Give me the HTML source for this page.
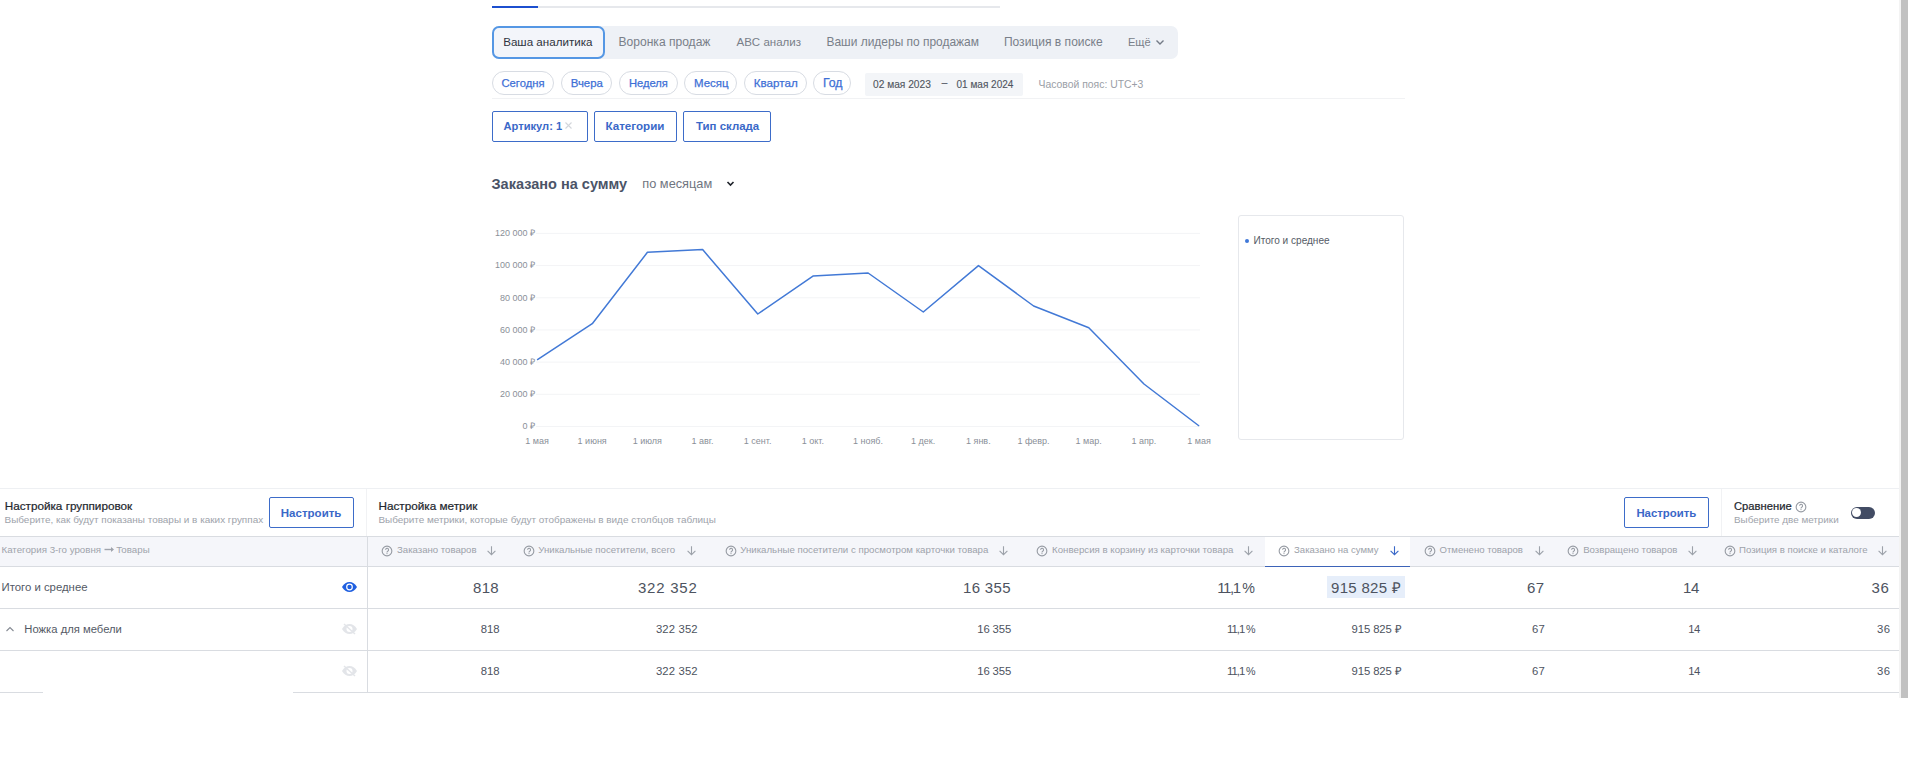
<!DOCTYPE html><html><head><meta charset='utf-8'><style>
html,body{margin:0;padding:0;background:#fff;width:1908px;height:773px;overflow:hidden;position:relative;font-family:"Liberation Sans", sans-serif}
.t{position:absolute;white-space:nowrap;line-height:1}
.b{position:absolute;box-sizing:border-box}
.ic{position:absolute}
</style></head><body>
<!-- progress line -->
<div class='b' style='left:492px;top:6px;width:508px;height:2px;background:#e6e8ec'></div>
<div class='b' style='left:492px;top:6px;width:46px;height:2px;background:#1c4fcf'></div>
<!-- tab bar -->
<div class='b' style='left:492px;top:26px;width:686px;height:32.5px;background:#eef1f6;border-radius:7px'></div>
<div class='b' style='left:492px;top:26px;width:113px;height:32.5px;background:#f3f5fa;border:2px solid #5597e4;border-radius:7px'></div>
<svg class='ic' style='left:1155px;top:38px' width='10' height='8' viewBox='0 0 10 8'><path d='M1.5 2.5L5 6l3.5-3.5' fill='none' stroke='#737a86' stroke-width='1.4'/></svg>
<!-- chips -->
<div class='b' style='left:492px;top:71px;width:62.39999999999998px;height:24px;border:1px solid #d8dce3;border-radius:12px'></div><div class='b' style='left:561px;top:71px;width:51.39999999999998px;height:24px;border:1px solid #d8dce3;border-radius:12px'></div><div class='b' style='left:619.4px;top:71px;width:58.30000000000007px;height:24px;border:1px solid #d8dce3;border-radius:12px'></div><div class='b' style='left:684.4px;top:71px;width:53.0px;height:24px;border:1px solid #d8dce3;border-radius:12px'></div><div class='b' style='left:744.2px;top:71px;width:62.59999999999991px;height:24px;border:1px solid #d8dce3;border-radius:12px'></div><div class='b' style='left:813.3px;top:71px;width:38.10000000000002px;height:24px;border:1px solid #d8dce3;border-radius:12px'></div>
<div class='b' style='left:865px;top:73px;width:158px;height:23px;background:#f3f5f8;border-radius:2px'></div>
<div class='b' style='left:492px;top:98px;width:913px;height:1px;background:#f1f2f4'></div>
<!-- filter buttons -->
<div class='b' style='left:492px;top:111px;width:96px;height:31px;border:1.5px solid #3d6cc9;border-radius:2px'></div><div class='b' style='left:594px;top:111px;width:83px;height:31px;border:1.5px solid #3d6cc9;border-radius:2px'></div><div class='b' style='left:683px;top:111px;width:88px;height:31px;border:1.5px solid #3d6cc9;border-radius:2px'></div>
<svg class='ic' style='left:564px;top:121px' width='9' height='9' viewBox='0 0 9 9'><path d='M1.5 1.5l6 6M7.5 1.5l-6 6' stroke='#d3d6db' stroke-width='1.1'/></svg>
<!-- chart chevron -->
<svg class='ic' style='left:726px;top:179px' width='9' height='9' viewBox='0 0 9 9'><path d='M1.5 3L4.5 6l3-3' fill='none' stroke='#1f232b' stroke-width='1.6'/></svg>
<svg style='position:absolute;left:0;top:0' width='1908' height='773' viewBox='0 0 1908 773'><line x1='536' x2='1200' y1='233.40' y2='233.40' stroke='#f3f4f6' stroke-width='1'/><line x1='536' x2='1200' y1='265.58' y2='265.58' stroke='#f3f4f6' stroke-width='1'/><line x1='536' x2='1200' y1='297.76' y2='297.76' stroke='#f3f4f6' stroke-width='1'/><line x1='536' x2='1200' y1='329.94' y2='329.94' stroke='#f3f4f6' stroke-width='1'/><line x1='536' x2='1200' y1='362.12' y2='362.12' stroke='#f3f4f6' stroke-width='1'/><line x1='536' x2='1200' y1='394.30' y2='394.30' stroke='#f3f4f6' stroke-width='1'/><line x1='536' x2='1200' y1='426.48' y2='426.48' stroke='#f3f4f6' stroke-width='1'/><polyline points='537.1,359.8 592.27,323.7 647.44,252.3 702.61,249.6 757.78,314 812.95,276.1 868.12,273 923.29,312 978.46,265.6 1033.63,306 1088.8000000000002,327.8 1143.97,384 1199.1399999999999,426' fill='none' stroke='#4279d6' stroke-width='1.5' stroke-linejoin='round'/></svg>
<!-- legend -->
<div class='b' style='left:1238px;top:215px;width:166px;height:225px;border:1px solid #e6e8ec;border-radius:3px'></div>
<div class='b' style='left:1245px;top:239px;width:4px;height:4px;border-radius:50%;background:#3f78d8'></div>
<!-- bottom section -->
<div class='b' style='left:0;top:488px;width:1900px;height:1px;background:#eef0f3'></div>
<div class='b' style='left:366px;top:489px;width:1px;height:47px;background:#f1f2f4'></div>
<div class='b' style='left:1721px;top:489px;width:1px;height:47px;background:#f1f2f4'></div>
<div class='b' style='left:269px;top:497px;width:85px;height:31px;border:1.5px solid #3d6cc9;border-radius:2px'></div>
<div class='b' style='left:1624px;top:497px;width:85px;height:31px;border:1.5px solid #3d6cc9;border-radius:2px'></div>
<svg class='ic' style='left:1794.75px;top:500.5px' width='12' height='12' viewBox='0 0 12 12'><circle cx='6' cy='6' r='4.85' fill='none' stroke='#969ba3' stroke-width='1.1'/><path d='M4.55 4.85a1.5 1.5 0 1 1 2.15 1.35c-.45.25-.7.55-.7 1v.3' fill='none' stroke='#969ba3' stroke-width='1.05'/><circle cx='6' cy='8.55' r='.6' fill='#969ba3'/></svg>
<div class='b' style='left:1851px;top:507px;width:24px;height:12px;border-radius:6px;background:#424c64'></div>
<div class='b' style='left:1851.8px;top:507.9px;width:9.4px;height:9.4px;border-radius:50%;background:#fff'></div>
<!-- table -->
<div class='b' style='left:0;top:536px;width:1899px;height:31px;background:#f5f6fa;border-top:1px solid #d9dce1;border-bottom:1px solid #d9dce1'></div>
<div class='b' style='left:1265px;top:537px;width:145px;height:29px;background:#fff'></div><div class='b' style='left:1265px;top:566px;width:145px;height:1px;background:#3d63b8'></div>
<div class='b' style='left:0;top:608px;width:1899px;height:1px;background:#d9dce1'></div>
<div class='b' style='left:0;top:650px;width:1899px;height:1px;background:#d9dce1'></div>
<div class='b' style='left:0;top:692px;width:43px;height:1px;background:#d9dce1'></div>
<div class='b' style='left:293px;top:692px;width:1606px;height:1px;background:#d9dce1'></div>
<div class='b' style='left:367px;top:536px;width:1px;height:157px;background:#d9dce1'></div>
<div class='b' style='left:1327px;top:576px;width:78px;height:22px;background:#e6eefa'></div>
<!-- eyes -->
<svg class='ic' style='left:341px;top:581px' width='17' height='12' viewBox='0 0 17 12'><path d='M1 6C3 2.6 5.6 1 8.5 1S14 2.6 16 6c-2 3.4-4.6 5-7.5 5S3 9.4 1 6z' fill='#1f5fe0'/><circle cx='8.5' cy='6' r='3.4' fill='#fff'/><circle cx='8.5' cy='6' r='2.2' fill='#1f5fe0'/></svg>
<svg class='ic' style='left:341px;top:623px' width='17' height='12' viewBox='0 0 17 12'><path d='M1 6C3 2.6 5.6 1 8.5 1S14 2.6 16 6c-2 3.4-4.6 5-7.5 5S3 9.4 1 6z' fill='#e3e5e9'/><circle cx='8.5' cy='6' r='3' fill='#fff'/><path d='M3 1l11 10' stroke='#e3e5e9' stroke-width='1.5'/></svg>
<svg class='ic' style='left:341px;top:665px' width='17' height='12' viewBox='0 0 17 12'><path d='M1 6C3 2.6 5.6 1 8.5 1S14 2.6 16 6c-2 3.4-4.6 5-7.5 5S3 9.4 1 6z' fill='#e3e5e9'/><circle cx='8.5' cy='6' r='3' fill='#fff'/><path d='M3 1l11 10' stroke='#e3e5e9' stroke-width='1.5'/></svg>
<svg class='ic' style='left:5px;top:625px' width='10' height='8' viewBox='0 0 10 8'><path d='M1.5 6L5 2.5 8.5 6' fill='none' stroke='#858a93' stroke-width='1.1'/></svg>
<svg class='ic' style='left:380.5px;top:544.5px' width='12' height='12' viewBox='0 0 12 12'><circle cx='6' cy='6' r='4.85' fill='none' stroke='#969ba3' stroke-width='1.1'/><path d='M4.55 4.85a1.5 1.5 0 1 1 2.15 1.35c-.45.25-.7.55-.7 1v.3' fill='none' stroke='#969ba3' stroke-width='1.05'/><circle cx='6' cy='8.55' r='.6' fill='#969ba3'/></svg><svg class='ic' style='left:487.4px;top:546px' width='10' height='10' viewBox='0 0 10 10'><path d='M4.5 0.3v8.4M0.6 4.9l3.9 3.85 3.9-3.85' fill='none' stroke='#9da2aa' stroke-width='1.1'/></svg><svg class='ic' style='left:522.7px;top:544.5px' width='12' height='12' viewBox='0 0 12 12'><circle cx='6' cy='6' r='4.85' fill='none' stroke='#969ba3' stroke-width='1.1'/><path d='M4.55 4.85a1.5 1.5 0 1 1 2.15 1.35c-.45.25-.7.55-.7 1v.3' fill='none' stroke='#969ba3' stroke-width='1.05'/><circle cx='6' cy='8.55' r='.6' fill='#969ba3'/></svg><svg class='ic' style='left:686.5px;top:546px' width='10' height='10' viewBox='0 0 10 10'><path d='M4.5 0.3v8.4M0.6 4.9l3.9 3.85 3.9-3.85' fill='none' stroke='#9da2aa' stroke-width='1.1'/></svg><svg class='ic' style='left:724.6px;top:544.5px' width='12' height='12' viewBox='0 0 12 12'><circle cx='6' cy='6' r='4.85' fill='none' stroke='#969ba3' stroke-width='1.1'/><path d='M4.55 4.85a1.5 1.5 0 1 1 2.15 1.35c-.45.25-.7.55-.7 1v.3' fill='none' stroke='#969ba3' stroke-width='1.05'/><circle cx='6' cy='8.55' r='.6' fill='#969ba3'/></svg><svg class='ic' style='left:999.4px;top:546px' width='10' height='10' viewBox='0 0 10 10'><path d='M4.5 0.3v8.4M0.6 4.9l3.9 3.85 3.9-3.85' fill='none' stroke='#9da2aa' stroke-width='1.1'/></svg><svg class='ic' style='left:1035.8px;top:544.5px' width='12' height='12' viewBox='0 0 12 12'><circle cx='6' cy='6' r='4.85' fill='none' stroke='#969ba3' stroke-width='1.1'/><path d='M4.55 4.85a1.5 1.5 0 1 1 2.15 1.35c-.45.25-.7.55-.7 1v.3' fill='none' stroke='#969ba3' stroke-width='1.05'/><circle cx='6' cy='8.55' r='.6' fill='#969ba3'/></svg><svg class='ic' style='left:1243.8px;top:546px' width='10' height='10' viewBox='0 0 10 10'><path d='M4.5 0.3v8.4M0.6 4.9l3.9 3.85 3.9-3.85' fill='none' stroke='#9da2aa' stroke-width='1.1'/></svg><svg class='ic' style='left:1277.5px;top:544.5px' width='12' height='12' viewBox='0 0 12 12'><circle cx='6' cy='6' r='4.85' fill='none' stroke='#969ba3' stroke-width='1.1'/><path d='M4.55 4.85a1.5 1.5 0 1 1 2.15 1.35c-.45.25-.7.55-.7 1v.3' fill='none' stroke='#969ba3' stroke-width='1.05'/><circle cx='6' cy='8.55' r='.6' fill='#969ba3'/></svg><svg class='ic' style='left:1389.5px;top:546px' width='10' height='10' viewBox='0 0 10 10'><path d='M4.5 0.3v8.4M0.6 4.9l3.9 3.85 3.9-3.85' fill='none' stroke='#3a68c8' stroke-width='1.1'/></svg><svg class='ic' style='left:1423.5px;top:544.5px' width='12' height='12' viewBox='0 0 12 12'><circle cx='6' cy='6' r='4.85' fill='none' stroke='#969ba3' stroke-width='1.1'/><path d='M4.55 4.85a1.5 1.5 0 1 1 2.15 1.35c-.45.25-.7.55-.7 1v.3' fill='none' stroke='#969ba3' stroke-width='1.05'/><circle cx='6' cy='8.55' r='.6' fill='#969ba3'/></svg><svg class='ic' style='left:1534.5px;top:546px' width='10' height='10' viewBox='0 0 10 10'><path d='M4.5 0.3v8.4M0.6 4.9l3.9 3.85 3.9-3.85' fill='none' stroke='#9da2aa' stroke-width='1.1'/></svg><svg class='ic' style='left:1567.2px;top:544.5px' width='12' height='12' viewBox='0 0 12 12'><circle cx='6' cy='6' r='4.85' fill='none' stroke='#969ba3' stroke-width='1.1'/><path d='M4.55 4.85a1.5 1.5 0 1 1 2.15 1.35c-.45.25-.7.55-.7 1v.3' fill='none' stroke='#969ba3' stroke-width='1.05'/><circle cx='6' cy='8.55' r='.6' fill='#969ba3'/></svg><svg class='ic' style='left:1688px;top:546px' width='10' height='10' viewBox='0 0 10 10'><path d='M4.5 0.3v8.4M0.6 4.9l3.9 3.85 3.9-3.85' fill='none' stroke='#9da2aa' stroke-width='1.1'/></svg><svg class='ic' style='left:1723.8px;top:544.5px' width='12' height='12' viewBox='0 0 12 12'><circle cx='6' cy='6' r='4.85' fill='none' stroke='#969ba3' stroke-width='1.1'/><path d='M4.55 4.85a1.5 1.5 0 1 1 2.15 1.35c-.45.25-.7.55-.7 1v.3' fill='none' stroke='#969ba3' stroke-width='1.05'/><circle cx='6' cy='8.55' r='.6' fill='#969ba3'/></svg><svg class='ic' style='left:1877.9px;top:546px' width='10' height='10' viewBox='0 0 10 10'><path d='M4.5 0.3v8.4M0.6 4.9l3.9 3.85 3.9-3.85' fill='none' stroke='#9da2aa' stroke-width='1.1'/></svg>
<svg class='ic' style='left:104px;top:546px' width='11' height='7' viewBox='0 0 11 7'><path d='M0.5 3.5h8.5' stroke='#a0a4ac' stroke-width='1.4'/><path d='M7 1l3 2.5-3 2.5z' fill='#a0a4ac'/></svg>
<!-- scrollbar -->
<div class='b' style='left:1899px;top:0;width:2px;height:698px;background:#f3f3f3'></div>
<div class='b' style='left:1901px;top:0;width:7px;height:698px;background:#c1c1c1'></div>
<span class='t' style='left:503.20px;top:36.18px;font-size:11.608px;font-weight:400;color:#2f3440;'>Ваша аналитика</span><span class='t' style='left:618.50px;top:35.78px;font-size:12.079px;font-weight:400;color:#797f89;'>Воронка продаж</span><span class='t' style='left:736.50px;top:37.24px;font-size:11.528px;font-weight:400;color:#797f89;'>ABC анализ</span><span class='t' style='left:826.50px;top:36.87px;font-size:11.964px;font-weight:400;color:#797f89;'>Ваши лидеры по продажам</span><span class='t' style='left:1003.90px;top:35.80px;font-size:12.054px;font-weight:400;color:#797f89;'>Позиция в поиске</span><span class='t' style='left:1127.90px;top:36.56px;font-size:11.149px;font-weight:400;color:#797f89;'>Ещё</span><span class='t' style='left:501.50px;top:77.70px;font-size:11.229px;font-weight:400;color:#3d6fd6;-webkit-text-stroke:0.25px #3d6fd6;'>Сегодня</span><span class='t' style='left:570.70px;top:77.54px;font-size:11.415px;font-weight:400;color:#3d6fd6;-webkit-text-stroke:0.25px #3d6fd6;'>Вчера</span><span class='t' style='left:628.90px;top:77.73px;font-size:11.191px;font-weight:400;color:#3d6fd6;-webkit-text-stroke:0.25px #3d6fd6;'>Неделя</span><span class='t' style='left:694.00px;top:77.51px;font-size:11.454px;font-weight:400;color:#3d6fd6;-webkit-text-stroke:0.25px #3d6fd6;'>Месяц</span><span class='t' style='left:753.70px;top:77.33px;font-size:11.655px;font-weight:400;color:#3d6fd6;-webkit-text-stroke:0.25px #3d6fd6;'>Квартал</span><span class='t' style='left:822.90px;top:76.78px;font-size:12.313px;font-weight:400;color:#3d6fd6;-webkit-text-stroke:0.25px #3d6fd6;'>Год</span><span class='t' style='left:873.00px;top:80.47px;font-size:10.197px;font-weight:400;color:#50555f;-webkit-text-stroke:0.12px #50555f;'>02 мая 2023</span><span class='t' style='left:941.50px;top:77.37px;font-size:10.787px;font-weight:400;color:#454b57;'>–</span><span class='t' style='left:956.50px;top:79.60px;font-size:10.039px;font-weight:400;color:#50555f;-webkit-text-stroke:0.12px #50555f;'>01 мая 2024</span><span class='t' style='left:1038.50px;top:79.50px;font-size:10.402px;font-weight:400;color:#9a9ea6;'>Часовой пояс: UTC+3</span><span class='t' style='left:503.50px;top:120.78px;font-size:11.130px;font-weight:700;color:#3a68c8;'>Артикул: 1</span><span class='t' style='left:605.50px;top:120.36px;font-size:11.628px;font-weight:700;color:#3a68c8;'>Категории</span><span class='t' style='left:696.00px;top:120.52px;font-size:11.442px;font-weight:700;color:#3a68c8;'>Тип склада</span><span class='t' style='left:491.50px;top:176.70px;font-size:14.532px;font-weight:700;color:#4b5467;'>Заказано на сумму</span><span class='t' style='left:642.30px;top:177.58px;font-size:12.786px;font-weight:400;color:#6f7580;'>по месяцам</span><span class='t' style='left:1253.50px;top:235.98px;font-size:10.061px;font-weight:400;color:#555b66;'>Итого и среднее</span><span class='t' style='left:4.70px;top:500.08px;font-size:11.720px;font-weight:400;color:#23272e;-webkit-text-stroke:0.22px #23272e;'>Настройка группировок</span><span class='t' style='left:4.50px;top:514.88px;font-size:9.951px;font-weight:400;color:#9ea3ab;'>Выберите, как будут показаны товары и в каких группах</span><span class='t' style='left:280.80px;top:508.24px;font-size:11.536px;font-weight:700;color:#3a68c8;'>Настроить</span><span class='t' style='left:378.40px;top:500.35px;font-size:11.755px;font-weight:400;color:#23272e;-webkit-text-stroke:0.22px #23272e;'>Настройка метрик</span><span class='t' style='left:378.40px;top:515.39px;font-size:9.933px;font-weight:400;color:#9ea3ab;'>Выберите метрики, которые будут отображены в виде столбцов таблицы</span><span class='t' style='left:1636.40px;top:508.35px;font-size:11.403px;font-weight:700;color:#3a68c8;'>Настроить</span><span class='t' style='left:1734.00px;top:500.50px;font-size:11.221px;font-weight:400;color:#23272e;-webkit-text-stroke:0.22px #23272e;'>Сравнение</span><span class='t' style='left:1734.00px;top:514.65px;font-size:9.871px;font-weight:400;color:#9ea3ab;'>Выберите две метрики</span><span class='t' style='left:1.50px;top:545.07px;font-size:9.724px;font-weight:400;color:#a0a4ac;'>Категория 3-го уровня <span style='color:transparent'>→</span> Товары</span><span class='t' style='left:397.00px;top:545.17px;font-size:9.604px;font-weight:400;color:#9da2aa;'>Заказано товаров</span><span class='t' style='left:538.30px;top:545.15px;font-size:9.635px;font-weight:400;color:#9da2aa;'>Уникальные посетители, всего</span><span class='t' style='left:740.20px;top:545.10px;font-size:9.689px;font-weight:400;color:#9da2aa;'>Уникальные посетители с просмотром карточки товара</span><span class='t' style='left:1052.10px;top:545.09px;font-size:9.703px;font-weight:400;color:#9da2aa;'>Конверсия в корзину из карточки товара</span><span class='t' style='left:1294.10px;top:545.20px;font-size:9.573px;font-weight:400;color:#9da2aa;'>Заказано на сумму</span><span class='t' style='left:1439.50px;top:545.16px;font-size:9.614px;font-weight:400;color:#9da2aa;'>Отменено товаров</span><span class='t' style='left:1583.20px;top:545.14px;font-size:9.643px;font-weight:400;color:#9da2aa;'>Возвращено товаров</span><span class='t' style='left:1739.00px;top:545.13px;font-size:9.651px;font-weight:400;color:#9da2aa;'>Позиция в поиске и каталоге</span><span class='t' style='left:1.50px;top:581.58px;font-size:11.367px;font-weight:400;color:#535965;'>Итого и среднее</span><span class='t' style='left:24.30px;top:624.27px;font-size:11.262px;font-weight:400;color:#535965;'>Ножка для мебели</span><span class='t' style='left:473.10px;top:580.30px;font-size:15.000px;font-weight:400;color:#4d5360;letter-spacing:0.290px;'>818</span><span class='t' style='left:638.00px;top:580.30px;font-size:15.000px;font-weight:400;color:#4d5360;letter-spacing:0.752px;'>322 352</span><span class='t' style='left:963.00px;top:580.30px;font-size:15.000px;font-weight:400;color:#4d5360;letter-spacing:0.318px;'>16 355</span><span class='t' style='left:1217.17px;top:580.30px;font-size:15.000px;font-weight:400;color:#4d5360;'><span style='letter-spacing:-0.09em'>11,1</span><span style='letter-spacing:-0.12em'> </span><span style='font-size:0.95em'>%</span></span><span class='t' style='left:1331.10px;top:580.30px;font-size:15.000px;font-weight:400;color:#4d5360;letter-spacing:0.290px;'>915 825 ₽</span><span class='t' style='left:1526.90px;top:580.30px;font-size:15.000px;font-weight:400;color:#4d5360;letter-spacing:0.556px;'>67</span><span class='t' style='left:1682.90px;top:580.30px;font-size:15.000px;font-weight:400;color:#4d5360;letter-spacing:-0.144px;'>14</span><span class='t' style='left:1871.50px;top:580.30px;font-size:15.000px;font-weight:400;color:#4d5360;letter-spacing:0.756px;'>36</span><span class='t' style='left:480.70px;top:624.44px;font-size:11.300px;font-weight:400;color:#4d5360;letter-spacing:-0.053px;'>818</span><span class='t' style='left:655.90px;top:624.44px;font-size:11.300px;font-weight:400;color:#4d5360;letter-spacing:0.151px;'>322 352</span><span class='t' style='left:977.30px;top:624.44px;font-size:11.300px;font-weight:400;color:#4d5360;letter-spacing:-0.127px;'>16 355</span><span class='t' style='left:1227.08px;top:624.44px;font-size:11.300px;font-weight:400;color:#4d5360;'><span style='letter-spacing:-0.09em'>11,1</span><span style='letter-spacing:-0.12em'> </span><span style='font-size:0.95em'>%</span></span><span class='t' style='left:1351.60px;top:624.44px;font-size:11.300px;font-weight:400;color:#4d5360;letter-spacing:-0.098px;'>915 825 ₽</span><span class='t' style='left:1532.10px;top:624.44px;font-size:11.300px;font-weight:400;color:#4d5360;letter-spacing:0.111px;'>67</span><span class='t' style='left:1688.30px;top:624.44px;font-size:11.300px;font-weight:400;color:#4d5360;letter-spacing:-0.589px;'>14</span><span class='t' style='left:1876.90px;top:624.44px;font-size:11.300px;font-weight:400;color:#4d5360;letter-spacing:0.511px;'>36</span><span class='t' style='left:480.70px;top:666.44px;font-size:11.300px;font-weight:400;color:#4d5360;letter-spacing:-0.053px;'>818</span><span class='t' style='left:655.90px;top:666.44px;font-size:11.300px;font-weight:400;color:#4d5360;letter-spacing:0.151px;'>322 352</span><span class='t' style='left:977.30px;top:666.44px;font-size:11.300px;font-weight:400;color:#4d5360;letter-spacing:-0.127px;'>16 355</span><span class='t' style='left:1227.08px;top:666.44px;font-size:11.300px;font-weight:400;color:#4d5360;'><span style='letter-spacing:-0.09em'>11,1</span><span style='letter-spacing:-0.12em'> </span><span style='font-size:0.95em'>%</span></span><span class='t' style='left:1351.60px;top:666.44px;font-size:11.300px;font-weight:400;color:#4d5360;letter-spacing:-0.098px;'>915 825 ₽</span><span class='t' style='left:1532.10px;top:666.44px;font-size:11.300px;font-weight:400;color:#4d5360;letter-spacing:0.111px;'>67</span><span class='t' style='left:1688.30px;top:666.44px;font-size:11.300px;font-weight:400;color:#4d5360;letter-spacing:-0.589px;'>14</span><span class='t' style='left:1876.90px;top:666.44px;font-size:11.300px;font-weight:400;color:#4d5360;letter-spacing:0.511px;'>36</span><span class='t' style='left:494.95px;top:228.58px;font-size:9.000px;font-weight:400;color:#8a8f98;'>120 000 ₽</span><span class='t' style='left:494.95px;top:260.76px;font-size:9.000px;font-weight:400;color:#8a8f98;'>100 000 ₽</span><span class='t' style='left:499.97px;top:293.94px;font-size:9.000px;font-weight:400;color:#8a8f98;'>80 000 ₽</span><span class='t' style='left:499.97px;top:326.12px;font-size:9.000px;font-weight:400;color:#8a8f98;'>60 000 ₽</span><span class='t' style='left:499.97px;top:358.30px;font-size:9.000px;font-weight:400;color:#8a8f98;'>40 000 ₽</span><span class='t' style='left:499.97px;top:390.48px;font-size:9.000px;font-weight:400;color:#8a8f98;'>20 000 ₽</span><span class='t' style='left:522.48px;top:421.66px;font-size:9.000px;font-weight:400;color:#8a8f98;'>0 ₽</span><span class='t' style='left:525.21px;top:437.38px;font-size:9.000px;font-weight:400;color:#8a8f98;'>1 мая</span><span class='t' style='left:577.60px;top:437.38px;font-size:9.000px;font-weight:400;color:#8a8f98;'>1 июня</span><span class='t' style='left:632.72px;top:437.38px;font-size:9.000px;font-weight:400;color:#8a8f98;'>1 июля</span><span class='t' style='left:691.51px;top:437.38px;font-size:9.000px;font-weight:400;color:#8a8f98;'>1 авг.</span><span class='t' style='left:743.86px;top:437.38px;font-size:9.000px;font-weight:400;color:#8a8f98;'>1 сент.</span><span class='t' style='left:801.74px;top:437.38px;font-size:9.000px;font-weight:400;color:#8a8f98;'>1 окт.</span><span class='t' style='left:852.99px;top:437.38px;font-size:9.000px;font-weight:400;color:#8a8f98;'>1 нояб.</span><span class='t' style='left:911.07px;top:437.38px;font-size:9.000px;font-weight:400;color:#8a8f98;'>1 дек.</span><span class='t' style='left:966.01px;top:437.38px;font-size:9.000px;font-weight:400;color:#8a8f98;'>1 янв.</span><span class='t' style='left:1017.40px;top:437.38px;font-size:9.000px;font-weight:400;color:#8a8f98;'>1 февр.</span><span class='t' style='left:1075.56px;top:437.38px;font-size:9.000px;font-weight:400;color:#8a8f98;'>1 мар.</span><span class='t' style='left:1131.39px;top:437.38px;font-size:9.000px;font-weight:400;color:#8a8f98;'>1 апр.</span><span class='t' style='left:1187.21px;top:437.38px;font-size:9.000px;font-weight:400;color:#8a8f98;'>1 мая</span>
</body></html>
